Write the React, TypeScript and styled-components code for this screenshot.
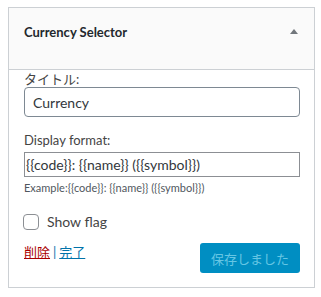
import React, { FC, useState } from "react";
import styled, { createGlobalStyle } from "styled-components";

const GlobalStyle = createGlobalStyle`
  body {
    margin: 0;
    background: #fff;
    font-family: Lato, "Noto Sans CJK JP", sans-serif;
    color: #23282d;
  }
`;

const App: FC = () => {
  const [title, setTitle] = useState<string>("Currency");
  const [format, setFormat] = useState<string>("{{code}}: {{name}} ({{symbol}})");
  const [flag, setFlag] = useState<boolean>(false);

  return (
    <>
      <GlobalStyle />
      <Widget>
        <Header>
          <Title>Currency Selector</Title>
          <Arrow />
        </Header>
        <Inside>
          <Label htmlFor="title">タイトル:</Label>
          <TitleInput id="title" value={title} onChange={(e) => setTitle(e.target.value)} />
          <Label htmlFor="format" $top={15}>
            Display format:
          </Label>
          <FormatInput id="format" value={format} onChange={(e) => setFormat(e.target.value)} />
          <Hint>Example:{"{{code}}: {{name}} ({{symbol}})"}</Hint>
          <CheckRow>
            <Check type="checkbox" checked={flag} onChange={() => setFlag(!flag)} />
            Show flag
          </CheckRow>
          <Actions>
            <Links>
              <DeleteLink href="#">削除</DeleteLink>
              <Sep>|</Sep>
              <DoneLink href="#">完了</DoneLink>
            </Links>
            <SaveBtn disabled>保存しました</SaveBtn>
          </Actions>
        </Inside>
      </Widget>
    </>
  );
};

const Widget = styled.div`
  margin: 7px 6px 0 8px;
  width: 307px;
  box-sizing: border-box;
  border: 1px solid #ccd0d4;
  background: #fff;
`;

const Header = styled.div`
  display: flex;
  align-items: flex-start;
  justify-content: space-between;
  height: 62px;
  box-sizing: border-box;
  padding: 14px 16px 0 15px;
  background: #fafafa;
  border-bottom: 1px solid #ccd0d4;
`;

const Title = styled.h3`
  margin: 0;
  font-size: 13px;
  line-height: 20px;
  font-weight: 700;
  color: #23282d;
`;

const Arrow = styled.span`
  width: 0;
  height: 0;
  margin-top: 7px;
  border-left: 4px solid transparent;
  border-right: 4px solid transparent;
  border-bottom: 5px solid #72777c;
`;

const Inside = styled.div`
  padding: 1px 14px 14px 15px;
  display: flex;
  flex-direction: column;
`;

const Label = styled.label<{ $top?: number }>`
  margin-top: ${(p) => p.$top ?? 0}px;
  font-size: 13px;
  line-height: 16px;
  color: #444;
`;

const TitleInput = styled.input`
  box-sizing: border-box;
  width: 276px;
  height: 30px;
  padding: 0 8px;
  border: 1px solid #7e8993;
  border-radius: 4px;
  font-family: inherit;
  font-size: 14px;
  color: #32373c;
  outline: none;
`;

const FormatInput = styled.input`
  box-sizing: border-box;
  width: 276px;
  height: 25px;
  margin-top: 4px;
  padding: 0 1px;
  border: 1px solid #8c8f94;
  border-radius: 0;
  font-family: inherit;
  font-size: 14px;
  color: #32373c;
  outline: none;
`;

const Hint = styled.div`
  margin-top: 4px;
  font-size: 11px;
  line-height: 14px;
  color: #50575e;
`;

const CheckRow = styled.label`
  display: flex;
  align-items: center;
  gap: 8px;
  margin-top: 18px;
  font-size: 14px;
  color: #444;
`;

const Check = styled.input`
  appearance: none;
  margin: 0 0 0 -1px;
  width: 16px;
  height: 16px;
  border: 1px solid #8c8f94;
  border-radius: 4px;
  background: #fff;
`;

const Actions = styled.div`
  display: flex;
  justify-content: space-between;
  align-items: flex-start;
  margin-top: 13px;
`;

const Links = styled.div`
  display: flex;
  gap: 3px;
  font-size: 13px;
  line-height: 18px;
  margin-top: 0;
`;

const DeleteLink = styled.a`
  color: #a00;
`;

const DoneLink = styled.a`
  color: #0073aa;
`;

const Sep = styled.span`
  color: #0073aa;
`;

const SaveBtn = styled.button`
  width: 100px;
  height: 30px;
  border: none;
  border-radius: 3px;
  background: #008ec2;
  color: #66c6e4;
  font-family: inherit;
  font-size: 13px;
`;

export default App;
